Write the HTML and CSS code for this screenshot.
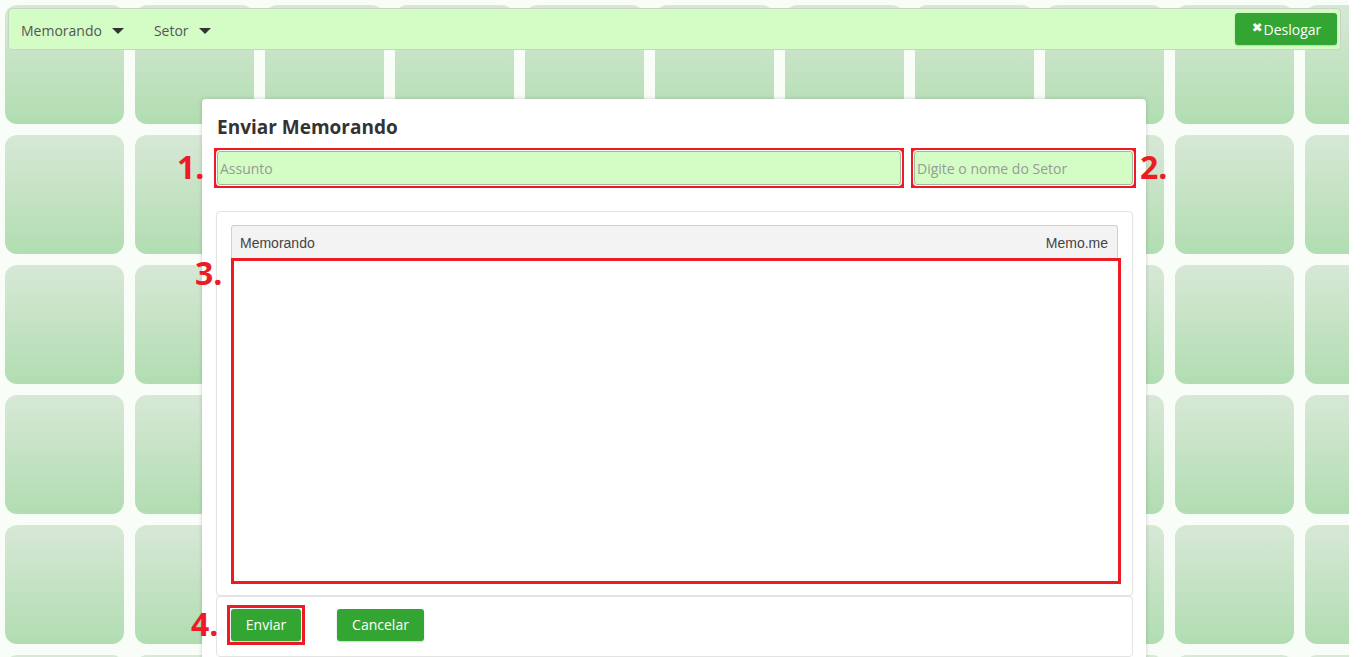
FILE: index.html
```html
<!DOCTYPE html>
<html lang="pt">
<head>
<meta charset="utf-8">
<title>Enviar Memorando</title>
<link rel="stylesheet" href="styles.css">
</head>
<body>
<div class="page">
  <div class="tiles">
    <div class="tile"></div><div class="tile"></div><div class="tile"></div><div class="tile"></div><div class="tile"></div><div class="tile"></div><div class="tile"></div><div class="tile"></div><div class="tile"></div><div class="tile"></div><div class="tile"></div>
    <div class="tile"></div><div class="tile"></div><div class="tile"></div><div class="tile"></div><div class="tile"></div><div class="tile"></div><div class="tile"></div><div class="tile"></div><div class="tile"></div><div class="tile"></div><div class="tile"></div>
    <div class="tile"></div><div class="tile"></div><div class="tile"></div><div class="tile"></div><div class="tile"></div><div class="tile"></div><div class="tile"></div><div class="tile"></div><div class="tile"></div><div class="tile"></div><div class="tile"></div>
    <div class="tile"></div><div class="tile"></div><div class="tile"></div><div class="tile"></div><div class="tile"></div><div class="tile"></div><div class="tile"></div><div class="tile"></div><div class="tile"></div><div class="tile"></div><div class="tile"></div>
    <div class="tile"></div><div class="tile"></div><div class="tile"></div><div class="tile"></div><div class="tile"></div><div class="tile"></div><div class="tile"></div><div class="tile"></div><div class="tile"></div><div class="tile"></div><div class="tile"></div>
    <div class="tile"></div><div class="tile"></div><div class="tile"></div><div class="tile"></div><div class="tile"></div><div class="tile"></div><div class="tile"></div><div class="tile"></div><div class="tile"></div><div class="tile"></div><div class="tile"></div>
  </div>

  <nav class="navbar">
    <div class="nav-menu">
      <span class="nav-item">Memorando <span class="caret"></span></span>
      <span class="nav-item">Setor <span class="caret"></span></span>
    </div>
    <button class="btn btn-logout"><span class="x-icon">&#x2716;</span>Deslogar</button>
  </nav>

  <div class="modal">
    <h1 class="modal-title">Enviar Memorando</h1>
    <div class="fields">
      <span class="mark mark-field"><input class="field field-subject" type="text" placeholder="Assunto"></span>
      <span class="mark mark-field"><input class="field field-sector" type="text" placeholder="Digite o nome do Setor"></span>
    </div>
    <div class="panel panel-body">
      <div class="editor-head">
        <span>Memorando</span>
        <span>Memo.me</span>
      </div>
      <div class="editor-body"></div>
    </div>
    <div class="panel panel-footer">
      <span class="mark mark-btn"><button class="btn btn-green btn-send">Enviar</button></span>
      <button class="btn btn-green btn-cancel">Cancelar</button>
    </div>

    <span class="anno anno-1">1.</span>
    <span class="anno anno-2">2.</span>
    <span class="anno anno-3">3.</span>
    <span class="anno anno-4">4.</span>
  </div>
</div>
</body>
</html>
```

FILE: styles.css
```css
html, body {
  margin: 0;
  padding: 0;
  background: #ffffff;
  height: 657px;
  overflow: hidden;
}

.page {
  position: relative;
  width: 1349px;
  height: 657px;
  overflow: hidden;
  background: #f8fdf7;
  font-family: "Open Sans", "Liberation Sans", sans-serif;
}

.tiles {
  display: grid;
  grid-template-columns: repeat(11, 119px);
  grid-auto-rows: 119px;
  column-gap: 11px;
  row-gap: 11px;
  padding: 5px 0 0 5px;
}

.tile {
  border-radius: 12px;
  background: linear-gradient(to bottom, #d7e8d6 0%, #b1ddb1 100%);
}

/* navbar */
.navbar {
  position: absolute;
  left: 8px;
  top: 8px;
  width: 1331px;
  height: 40px;
  background: #d3fdc4;
  border: 1px solid #c9d4c4;
  border-radius: 4px;
  display: flex;
  align-items: center;
  justify-content: space-between;
}

.nav-menu {
  display: flex;
  align-items: center;
  gap: 30px;
  padding: 2px 0 0 12px;
}

.nav-item {
  font-size: 14px;
  color: #555555;
  display: flex;
  align-items: center;
  gap: 10px;
}

.caret {
  display: inline-block;
  width: 0;
  height: 0;
  border-left: 6px solid transparent;
  border-right: 6px solid transparent;
  border-top: 6px solid #333333;
  margin-top: 1px;
}

.btn {
  font-family: "Open Sans", "Liberation Sans", sans-serif;
  border: none;
  cursor: pointer;
}

.btn-logout {
  margin-right: 3px;
  height: 32px;
  width: 102px;
  background: #33a532;
  color: #ffffff;
  font-size: 14px;
  border-radius: 3px;
  padding: 0 0 0 1px;
  display: flex;
  align-items: center;
  justify-content: center;
  gap: 1px;
  box-shadow: 0 1px 2px rgba(0, 0, 0, 0.15);
}

.x-icon {
  font-family: "DejaVu Sans", sans-serif;
  font-size: 13px;
  line-height: 1;
  margin-top: -3px;
}

/* modal */
.modal {
  position: absolute;
  left: 202px;
  top: 99px;
  width: 916px;
  height: 600px;
  padding: 0 13px 0 15px;
  background: #ffffff;
  border-radius: 4px;
  box-shadow: 0 0 4px rgba(0, 0, 0, 0.18);
}

.modal-title {
  margin: 0;
  padding-top: 15px;
  font-size: 19px;
  line-height: 26px;
  font-weight: 700;
  color: #333333;
}

.fields {
  display: flex;
  gap: 13px;
  margin-top: 11px;
}

.mark {
  display: block;
  border-style: solid;
  border-color: #ed1c24;
  padding: 1px;
  line-height: 0;
}

.mark-field {
  border-width: 3px;
  padding: 0;
  margin: -3px;
}

.mark-btn {
  border-width: 3px;
  margin: -4px;
}

.field {
  box-sizing: border-box;
  height: 34px;
  background: #d3fdc4;
  border: 1px solid #a9b3a5;
  box-shadow: 0 0 0 1px #ffffff;
  border-radius: 3px;
  padding: 0 2px;
  margin: 0;
  font-family: "Open Sans", "Liberation Sans", sans-serif;
  font-size: 14px;
  color: #555555;
  outline: none;
}

.field::placeholder {
  color: #999999;
}

.field-subject { width: 684px; }
.field-sector { width: 219px; }

.panel {
  box-sizing: border-box;
  width: 917px;
  margin-left: -1px;
  background: #ffffff;
  border: 1px solid #e3e3e3;
  border-radius: 4px;
}

.panel-body {
  margin-top: 26px;
  padding: 13px 14px 11px 14px;
  box-shadow: 0 1px 2px rgba(0, 0, 0, 0.05);
}

.editor-head {
  box-sizing: border-box;
  height: 35px;
  background: #f3f3f3;
  border: 1px solid #d0d0d0;
  border-bottom: none;
  border-radius: 3px 3px 0 0;
  display: flex;
  justify-content: space-between;
  align-items: center;
  padding: 0 9px 0 8px;
  font-family: "Liberation Sans", Arial, sans-serif;
  font-size: 14px;
  color: #444444;
}

.editor-body {
  box-sizing: border-box;
  height: 326px;
  margin-top: -2px;
  margin-right: -3px;
  border: 3px solid #ed1c24;
  background: #ffffff;
}

.panel-footer {
  height: 61px;
  display: flex;
  align-items: flex-start;
  gap: 36px;
  padding: 12px 0 0 14px;
}

.btn-green {
  height: 32px;
  background: #33a532;
  color: #ffffff;
  font-size: 14px;
  border-radius: 3px;
  box-shadow: 0 1px 2px rgba(0, 0, 0, 0.2);
  padding: 0;
  line-height: 32px;
}

.btn-send { width: 70px; }
.btn-cancel { width: 87px; }

/* annotation labels */
.anno {
  position: absolute;
  font-family: "Open Sans", "Liberation Sans", sans-serif;
  font-weight: 700;
  font-size: 32px;
  line-height: 1;
  color: #ed1c24;
}

.anno-1 { left: -25px; top: 52px; }
.anno-2 { left: 938px; top: 52px; }
.anno-3 { left: -7px; top: 158px; }
.anno-4 { left: -11px; top: 509px; }
```
